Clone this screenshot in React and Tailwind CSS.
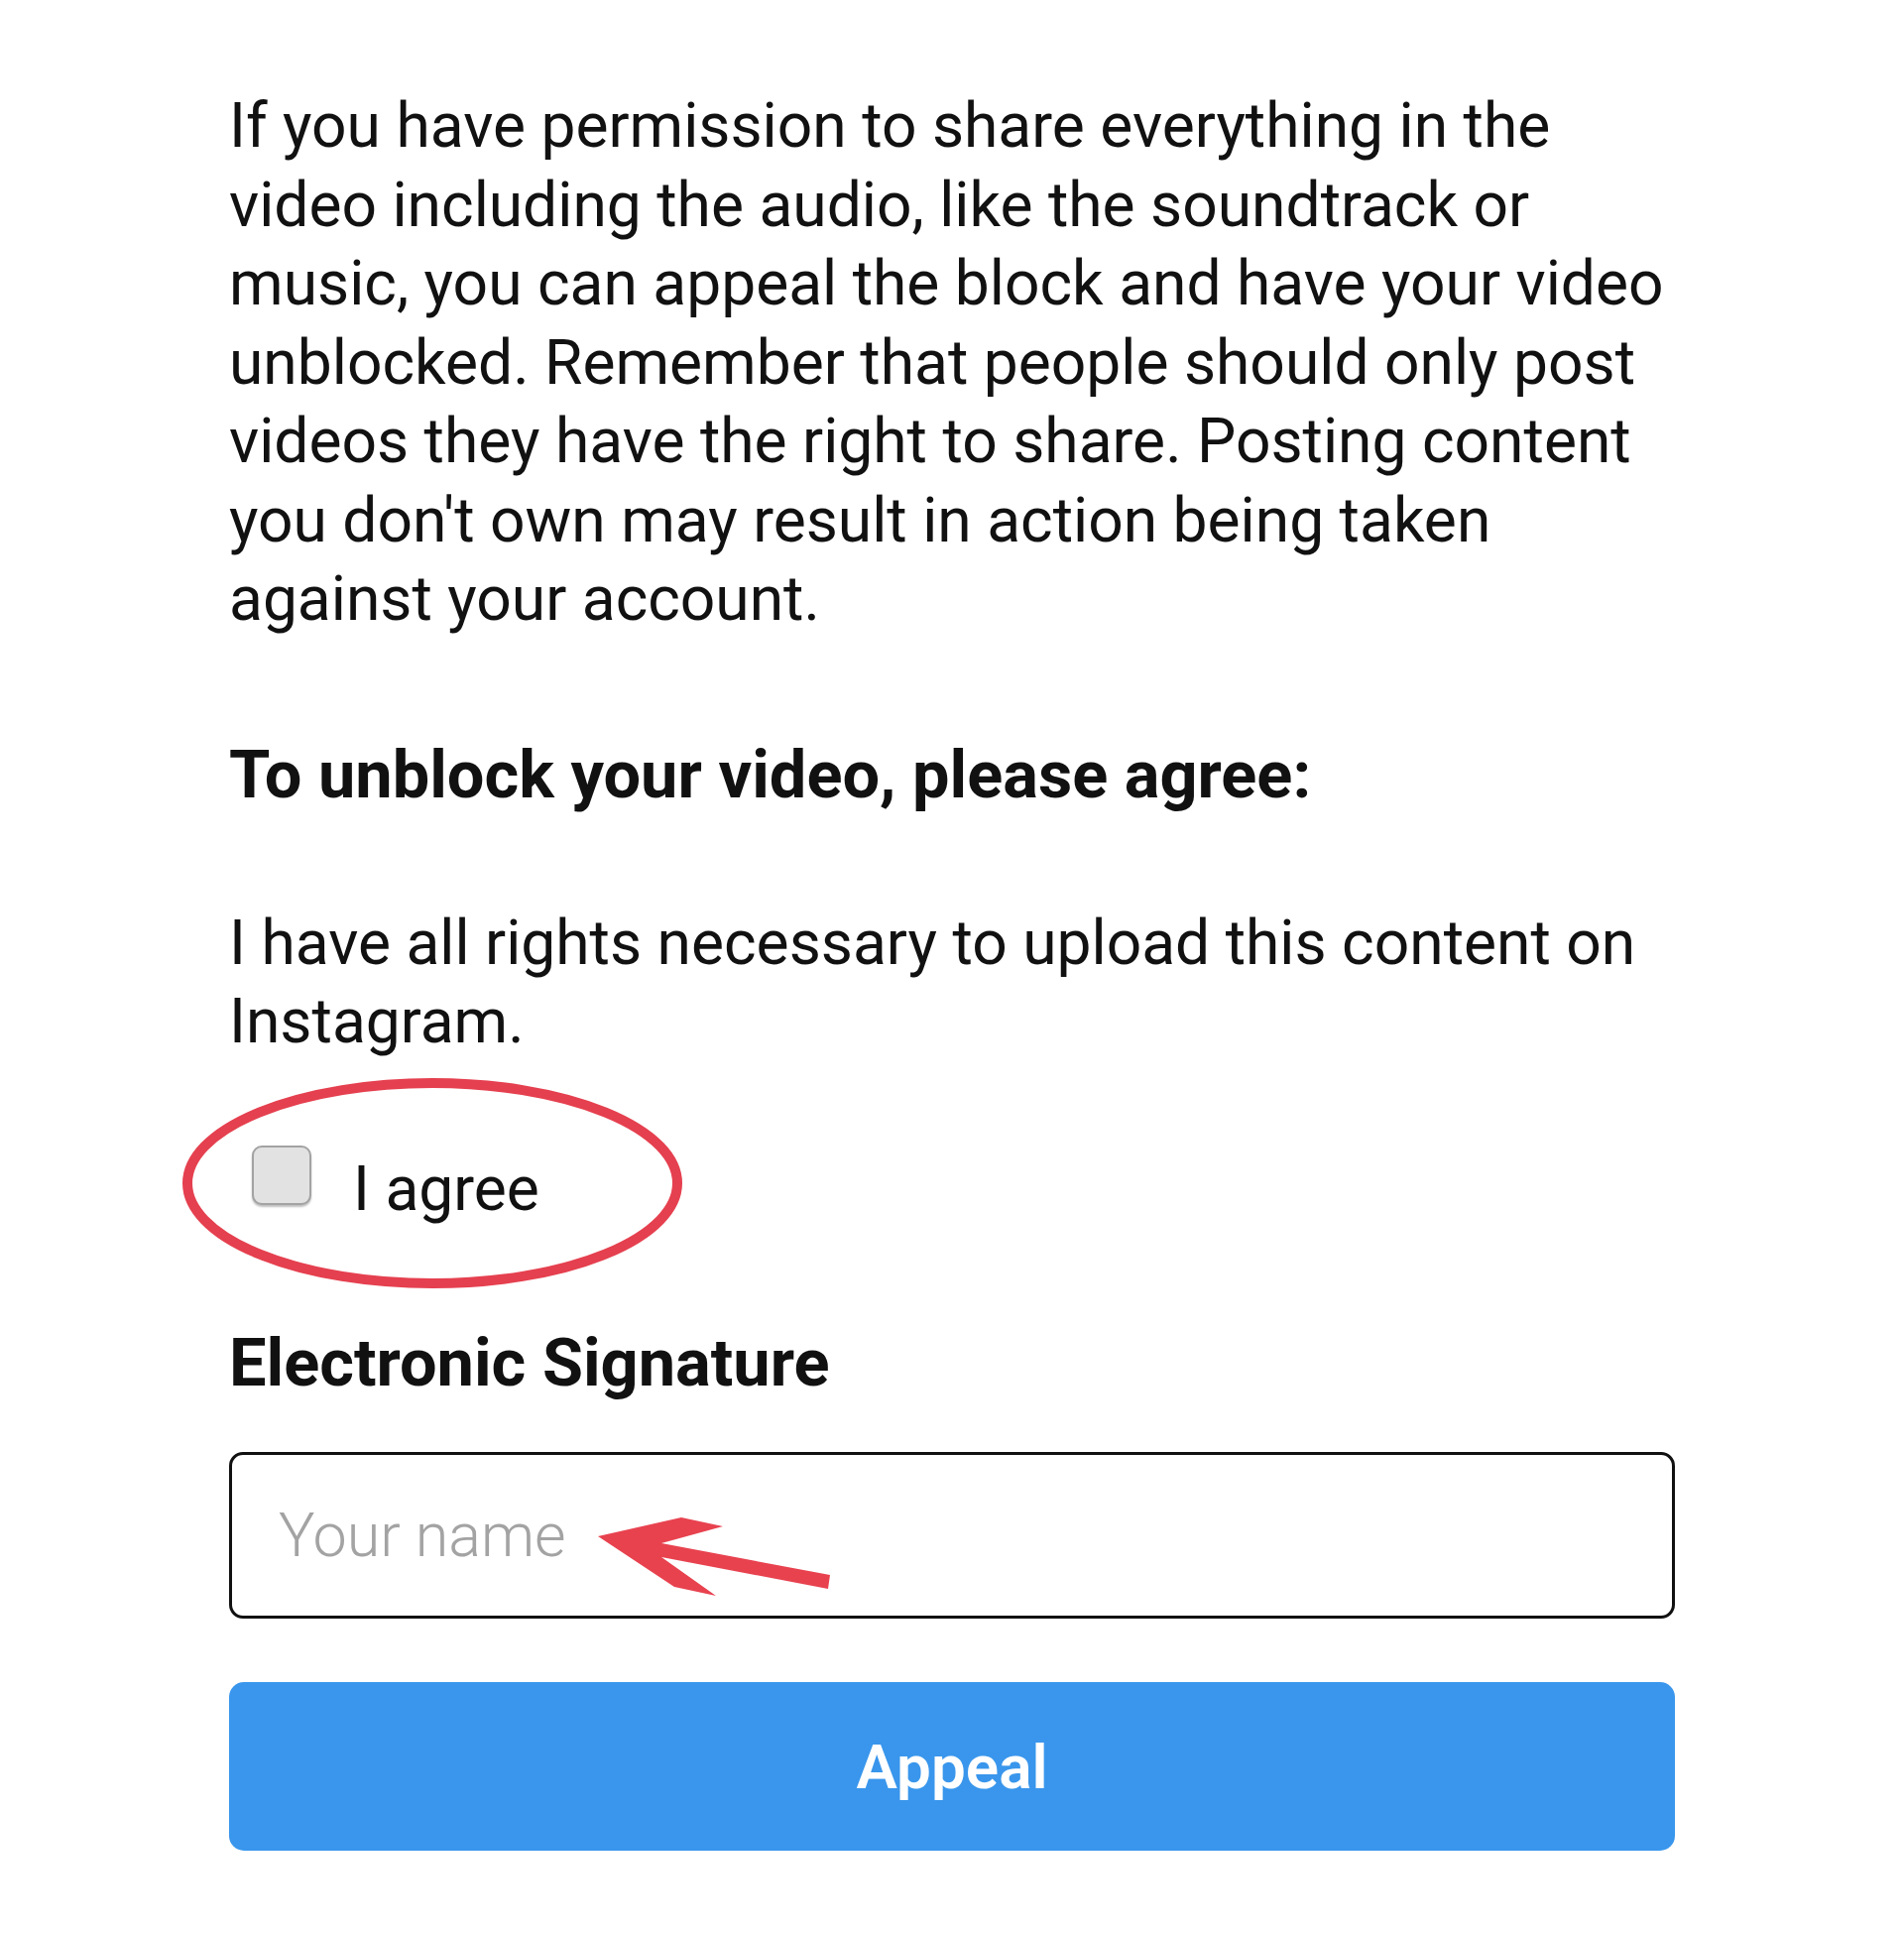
import React from 'react';

function App() {
  return (
    <div className="min-h-screen bg-white text-[#111] font-['Roboto',sans-serif]">
      <div className="mx-auto w-[1458px] pt-[87px] pb-[80px]">
        <p className="text-[62.3px] leading-[79.5px]">
          If you have permission to share everything in the video including the audio, like the soundtrack or music, you can appeal the block and have your video unblocked. Remember that people should only post videos they have the right to share. Posting content you don't own may result in action being taken against your account.
        </p>

        <h2 className="mt-[97px] text-[66.7px] leading-[80px] font-bold">To unblock your video, please agree:</h2>

        <p className="mt-[90px] text-[62.3px] leading-[79.5px]">
          I have all rights necessary to upload this content on Instagram.
        </p>

        {/* checkbox row, circled */}
        <div className="relative mt-[85px] flex items-start">
          <label className="flex items-start gap-[42px] pl-[23px]">
            <span className="block w-[60px] h-[60px] rounded-[10px] border-2 border-[#a3a3a3] bg-[#e2e2e2] shadow-[0_2px_2px_rgba(0,0,0,0.25)]"></span>
            <span className="mt-[4px] text-[62.3px] leading-[79.5px]">I agree</span>
          </label>
          <svg className="absolute left-[-60px] top-[-80px] pointer-events-none" width="540" height="240" viewBox="0 0 540 240">
            <ellipse cx="265" cy="118" rx="247" ry="101" fill="none" stroke="#e5404f" strokeWidth="10" />
          </svg>
        </div>

        <h2 className="mt-[96px] text-[66.7px] leading-[80px] font-bold">Electronic Signature</h2>

        <div className="relative mt-[50px]">
          <input
            type="text"
            placeholder="Your name"
            className="w-full h-[168px] rounded-[14px] border-[3px] border-[#111] bg-white pl-[47px] text-[61px] font-light placeholder:text-[#a3a3a3] outline-none"
          />
          <svg className="absolute left-[364px] top-[60px] pointer-events-none" width="250" height="90" viewBox="0 0 250 90">
            <polygon
              points="8,25 92,6 134,15 72,32 242,64 240,78 72,46 127,85 85,76"
              fill="#e8424f"
            />
          </svg>
        </div>

        <button className="mt-[64px] w-full h-[170px] rounded-[15px] bg-[#3996ec] text-white text-[62px] font-semibold">
          Appeal
        </button>
      </div>
    </div>
  );
}

export default App;
